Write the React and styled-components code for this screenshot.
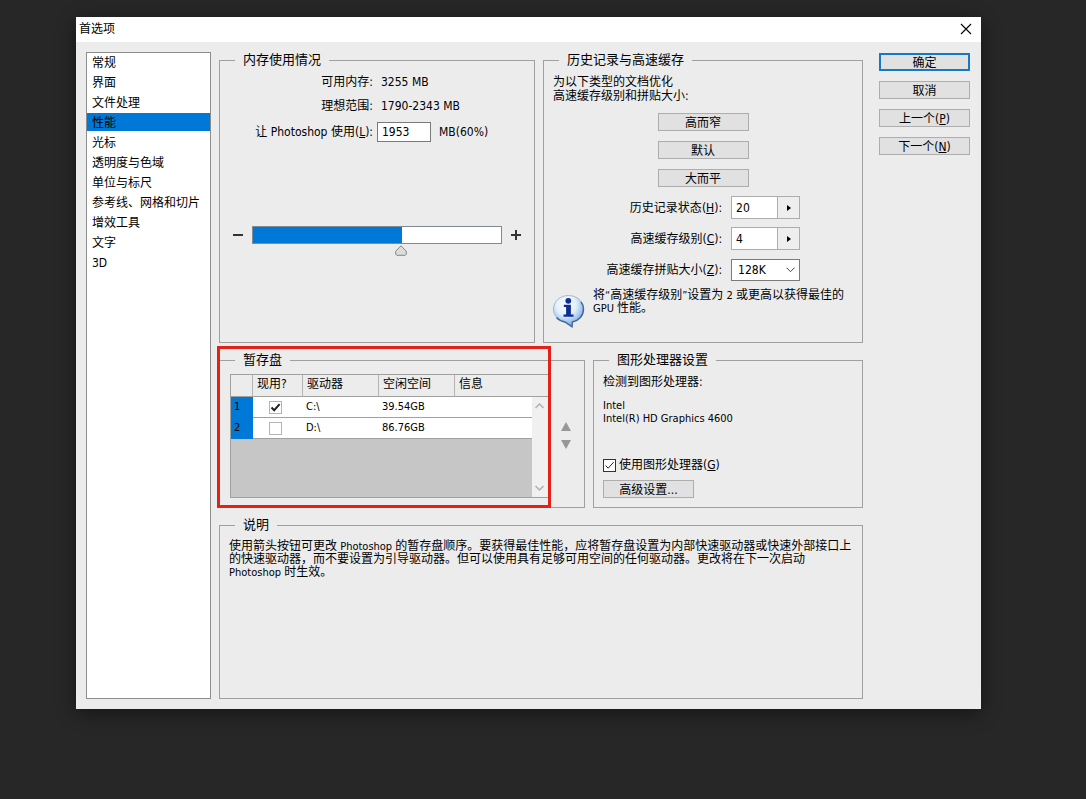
import React, { useState } from "react";
import styled, { createGlobalStyle, css } from "styled-components";

const svgUrl = (markup) => `url("data:image/svg+xml,${encodeURIComponent(markup)}")`;

const tickIcon = (color, width) =>
  svgUrl(
    `<svg xmlns='http://www.w3.org/2000/svg' width='11' height='11' viewBox='0 0 11 11'><path d='M1.5 5.5 4.2 8.2 9.6 2.2' fill='none' stroke='${color}' stroke-width='${width}'/></svg>`
  );
const chevronIcon = svgUrl(
  "<svg xmlns='http://www.w3.org/2000/svg' width='9' height='6' viewBox='0 0 9 6'><path d='M.5 .7 4.5 4.7 8.5 .7' fill='none' stroke='#444' stroke-width='1'/></svg>"
);
const thumbIcon = svgUrl(
  "<svg xmlns='http://www.w3.org/2000/svg' width='12' height='11' viewBox='0 0 12 11'><path d='M6 .8 11.3 6.2V9.2L10.3 10.3H1.7L.7 9.2V6.2Z' fill='#dcdcdc' stroke='#858585' stroke-width='1'/></svg>"
);

const GlobalStyle = createGlobalStyle`
  *, *::before, *::after { box-sizing: border-box; }
  body {
    margin: 0;
    background: #272727;
    color: #000;
    font: 12px/16px "DejaVu Sans Condensed", "Noto Sans CJK SC", sans-serif;
  }
  button, input, select { font: inherit; color: inherit; }
`;

const Page = styled.div`
  min-height: 100vh;
  padding: 17px 105px 90px 76px;
`;

const Dialog = styled.main`
  display: flex;
  flex-direction: column;
  background: #ececec;
  box-shadow: 0 4px 18px rgba(0, 0, 0, 0.45);
`;

const TitleBar = styled.header`
  display: flex;
  align-items: center;
  justify-content: space-between;
  height: 25px;
  padding: 0 9px 2px 3px;
  background: #fff;
`;

const Title = styled.h1`
  margin: 0;
  font-size: 12px;
  font-weight: 400;
`;

const PlainButton = styled.button`
  display: flex;
  align-items: center;
  justify-content: center;
  padding: 0;
  border: 0;
  background: none;
`;

const Body = styled.div`
  display: flex;
  gap: 8px;
  padding: 10px 11px 10px 10px;
`;

const Categories = styled.ul`
  display: flex;
  flex-direction: column;
  gap: 2px;
  flex: 0 0 125px;
  margin: 0;
  padding: 0;
  list-style: none;
  background: #fff;
  border: 1px solid #8c8c8c;
`;

const CategoryButton = styled.button`
  display: block;
  width: 100%;
  height: 18px;
  padding: 3px 5px 0;
  border: 0;
  text-align: left;
  line-height: 15px;
  background: ${(p) => (p.$selected ? "#0078d7" : "transparent")};
`;

const Panels = styled.div`
  display: flex;
  flex-direction: column;
  gap: 9px;
  flex: 1;
  min-width: 0;
`;

const PanelRow = styled.div`
  display: flex;
  gap: 8px;
  min-height: ${(p) => p.$min}px;
`;

const PanelCell = styled.div`
  position: relative;
  display: flex;
  flex: ${(p) => p.$share} 1 0;
  min-width: 0;
`;

const Group = styled.fieldset`
  flex: 1;
  min-width: 0;
  margin: 0;
  padding: ${(p) => p.$top}px 0 0;
  border: 1px solid #a0a0a0;
`;

const Legend = styled.legend`
  margin-left: 15px;
  padding: 0 8px;
  font-size: 13px;
  line-height: 16px;
`;

const Actions = styled.div`
  display: flex;
  flex-direction: column;
  gap: 10px;
  margin-left: 8px;
  padding-top: 1px;
`;

const PushButton = styled.button`
  display: block;
  width: 91px;
  height: 18px;
  padding: 1px 0 0;
  border: 1px solid #adadad;
  background: #e1e1e1;
  text-align: center;
  line-height: 16px;
  ${(p) =>
    p.$primary &&
    css`
      padding: 0;
      border: 2px solid #1779c4;
    `}
`;

const MemoryFields = styled.div`
  display: grid;
  grid-template-columns: 1fr 1fr;
  grid-template-rows: 24px 24px 28px;
  align-items: center;
  column-gap: 4px;
  padding-right: 4px;
`;

const FieldLabel = styled.label`
  text-align: right;
  white-space: nowrap;
`;

const FieldValue = styled.output`
  padding-left: 4px;
`;

const FieldInline = styled.div`
  display: flex;
  align-items: center;
  gap: 8px;
`;

const TextBox = styled.input`
  width: 54px;
  height: 20px;
  padding: 0 4px;
  border: 1px solid #7a7a7a;
  background: #fff;
`;

const SliderRow = styled.div`
  display: flex;
  align-items: center;
  gap: 9px;
  margin-top: 80px;
  padding: 0 13px;
`;

const Slider = styled.input`
  appearance: none;
  flex: 1;
  min-width: 0;
  height: 18px;
  margin: 0;
  background: none;

  &::-webkit-slider-runnable-track {
    height: 18px;
    border: 1px solid #7f8a94;
    background: linear-gradient(
      to right,
      #0078d7 ${(p) => p.$fill}%,
      #fff ${(p) => p.$fill}%
    );
  }

  &::-webkit-slider-thumb {
    appearance: none;
    width: 12px;
    height: 11px;
    margin-top: 18px;
    background: ${thumbIcon} no-repeat;
  }
`;

const Paragraph = styled.p`
  margin: 0;
  line-height: ${(p) => p.$line || 13}px;
`;

const GpuName = styled(Paragraph)`
  margin-top: 10px;
  font-size: 11px;
`;

const Small = styled.span`
  font-size: 11px;
`;

const Presets = styled.div`
  display: flex;
  flex-direction: column;
  align-items: center;
  gap: 10px;
  margin-top: 10px;
`;

const CacheFields = styled.div`
  display: grid;
  grid-template-columns: 56% 1fr;
  grid-auto-rows: 23px;
  align-items: center;
  gap: 8px 9px;
  margin-top: 9px;
`;

const Stepper = styled.div`
  display: flex;
  width: 69px;
  height: 23px;
  border: 1px solid #adadad;
  background: #fff;

  input {
    flex: 1;
    min-width: 0;
    padding: 0 4px;
    border: 0;
    background: none;
  }

  button {
    width: 22px;
    border-left: 1px solid #adadad;
    background: #eee;
  }
`;

const Select = styled.select`
  appearance: none;
  width: 69px;
  height: 22px;
  padding: 0 6px;
  border: 1px solid #7a7a7a;
  border-radius: 0;
  background: #fff ${chevronIcon} no-repeat right 4px center;
`;

const Hint = styled.div`
  display: flex;
  align-items: flex-start;
  gap: 8px;
  margin-top: 8px;
  padding: 0 9px 0 8px;

  svg {
    flex: none;
    margin-top: 5px;
  }
`;

const Inset = styled.div`
  padding: 0 9px;
`;

const ScratchLayout = styled.div`
  display: flex;
  padding: 0 0 9px 10px;
`;

const TableFrame = styled.div`
  position: relative;
  flex: 1;
  min-width: 0;
  height: 124px;
  border: 1px solid #a0a0a0;
  background: #c6c6c6;
`;

const DiskTable = styled.table`
  width: 100%;
  table-layout: fixed;
  border-collapse: separate;
  border-spacing: 0;

  th,
  td {
    padding: 0 4px;
    border-bottom: 1px solid #a0a0a0;
    font-weight: 400;
    text-align: left;
    line-height: 16px;
  }

  thead th {
    height: 22px;
    padding-bottom: 3px;
    border-right: 1px solid #b4b4b4;
    background: #ececec;
  }

  thead th:last-child {
    border-right: 0;
  }

  tbody th {
    border-bottom-color: #0078d7;
    background: #0078d7;
  }

  tbody th,
  tbody td {
    height: 21px;
    padding: 0 3px;
    font-size: 11px;
  }

  tbody td {
    background: #fff;
  }
`;

const CheckCell = styled.td`
  &&& {
    padding-left: 16px;
  }
`;

const Column = styled.col`
  width: ${(p) => p.$width}px;
`;

const CheckBox = styled.input`
  appearance: none;
  display: block;
  flex: none;
  width: 13px;
  height: 13px;
  margin: 0;
  border: 1px solid ${(p) => p.$edge};
  background: #fff;

  &:checked {
    background: #fff ${(p) => tickIcon("#222", p.$stroke)} center no-repeat;
  }
`;

const ScrollBar = styled.div`
  position: absolute;
  top: 22px;
  right: 0;
  bottom: 0;
  display: flex;
  flex-direction: column;
  justify-content: space-between;
  width: 17px;
  padding: 6px 3px 6px 0;
  background: #f0f0f0;
`;

const OrderButtons = styled.div`
  display: flex;
  flex-direction: column;
  align-items: center;
  gap: 9px;
  width: 34px;
  padding: 48px 2px 0 0;
`;

const Highlight = styled.div`
  position: absolute;
  top: -6px;
  right: 34px;
  bottom: 0;
  left: -2px;
  border: 3px solid #e2211c;
  pointer-events: none;
`;

const CheckLabel = styled.label`
  display: flex;
  align-items: center;
  gap: 3px;
  margin: 32px 0 7px;
`;

const categories = [
  "常规",
  "界面",
  "文件处理",
  "性能",
  "光标",
  "透明度与色域",
  "单位与标尺",
  "参考线、网格和切片",
  "增效工具",
  "文字",
  "3D",
];

const disks = [
  { drive: "C:\\", free: "39.54GB", active: true },
  { drive: "D:\\", free: "86.76GB", active: false },
];

function InfoIcon() {
  return (
    <svg width="33" height="34" viewBox="0 0 32 34" aria-hidden="true">
      <defs>
        <radialGradient id="bubble" cx="42%" cy="30%" r="68%">
          <stop offset="0" stopColor="#ffffff" />
          <stop offset="0.5" stopColor="#e2effc" />
          <stop offset="1" stopColor="#74a7e2" />
        </radialGradient>
      </defs>
      <path
        d="M16 1.500C7.500 1.500 1 7.500 1 15 1 21.600 5.600 26.800 12.500 28L19.500 32.800 19.800 28C26.400 26.600 31 21.600 31 15 31 7.500 24.500 1.500 16 1.500Z"
        fill="url(#bubble)"
        stroke="#a3b8d4"
      />
      <path
        d="M28.500 8C30.200 10 31 12.300 31 15 31 21.600 26.400 26.600 19.800 28L19.500 32.800 12.500 28C9 27.400 6 25.800 4 23.500"
        fill="none"
        stroke="#3f66a3"
        strokeWidth="1.400"
      />
      <circle cx="15.800" cy="6.800" r="2.900" fill="#0d2f91" />
      <path d="M11.300 10.800H18.400V20.500H21V22.800H11V20.500H13.600V13.100H11.300Z" fill="#0d2f91" />
    </svg>
  );
}

function StepperField({ id, label, accel, value }) {
  return (
    <>
      <FieldLabel htmlFor={id}>
        {label}(<u>{accel}</u>):
      </FieldLabel>
      <Stepper>
        <input id={id} defaultValue={value} />
        <PlainButton type="button" aria-label={label}>
          <svg width="4" height="6" viewBox="0 0 4 6">
            <path d="M0 0 4 3 0 6Z" fill="#000" />
          </svg>
        </PlainButton>
      </Stepper>
    </>
  );
}

function MemoryGroup() {
  const [share, setShare] = useState(60);
  return (
    <Group $top={2}>
      <Legend>内存使用情况</Legend>
      <MemoryFields>
        <FieldLabel htmlFor="available">可用内存:</FieldLabel>
        <FieldValue id="available">3255 MB</FieldValue>
        <FieldLabel htmlFor="ideal">理想范围:</FieldLabel>
        <FieldValue id="ideal">1790-2343 MB</FieldValue>
        <FieldLabel htmlFor="usage">
          让 Photoshop 使用(<u>L</u>):
        </FieldLabel>
        <FieldInline>
          <TextBox id="usage" defaultValue="1953" />
          <span>MB({share}%)</span>
        </FieldInline>
      </MemoryFields>
      <SliderRow>
        <PlainButton type="button" aria-label="减少" onClick={() => setShare(Math.max(0, share - 1))}>
          <svg width="10" height="10" viewBox="0 0 10 10">
            <path d="M0 5H10" stroke="#333" strokeWidth="2" />
          </svg>
        </PlainButton>
        <Slider
          type="range"
          aria-label="内存使用情况"
          min="0"
          max="100"
          value={share}
          $fill={share}
          onChange={(e) => setShare(Number(e.target.value))}
        />
        <PlainButton type="button" aria-label="增加" onClick={() => setShare(Math.min(100, share + 1))}>
          <svg width="10" height="10" viewBox="0 0 10 10">
            <path d="M0 5H10M5 0V10" stroke="#333" strokeWidth="2" />
          </svg>
        </PlainButton>
      </SliderRow>
    </Group>
  );
}

function CacheGroup() {
  return (
    <Group $top={7}>
      <Legend>历史记录与高速缓存</Legend>
      <Inset>
        <Paragraph $line={14}>
          为以下类型的文档优化
          <br />
          高速缓存级别和拼贴大小:
        </Paragraph>
      </Inset>
      <Presets>
        <PushButton type="button">高而窄</PushButton>
        <PushButton type="button">默认</PushButton>
        <PushButton type="button">大而平</PushButton>
      </Presets>
      <CacheFields>
        <StepperField id="history" label="历史记录状态" accel="H" value="20" />
        <StepperField id="levels" label="高速缓存级别" accel="C" value="4" />
        <FieldLabel htmlFor="tile">
          高速缓存拼贴大小(<u>Z</u>):
        </FieldLabel>
        <Select id="tile" defaultValue="128K">
          <option>128K</option>
        </Select>
      </CacheFields>
      <Hint>
        <InfoIcon />
        <Paragraph>
          将<Small>“</Small>高速缓存级别<Small>”</Small>设置为<Small> 2 </Small>或更高以获得最佳的
          <br />
          <Small>GPU </Small>性能。
        </Paragraph>
      </Hint>
    </Group>
  );
}

function ScratchGroup() {
  return (
    <Group $top={6}>
      <Legend>暂存盘</Legend>
      <ScratchLayout>
        <TableFrame>
          <DiskTable>
            <colgroup>
              <Column $width={22} />
              <Column $width={50} />
              <Column $width={76} />
              <Column $width={76} />
              <col />
            </colgroup>
            <thead>
              <tr>
                <th aria-label="序号" />
                <th>现用?</th>
                <th>驱动器</th>
                <th>空闲空间</th>
                <th>信息</th>
              </tr>
            </thead>
            <tbody>
              {disks.map((disk, i) => (
                <tr key={disk.drive}>
                  <th>{i + 1}</th>
                  <CheckCell>
                    <CheckBox
                      type="checkbox"
                      aria-label={disk.drive}
                      defaultChecked={disk.active}
                      $edge="#b4b4b4"
                      $stroke={2}
                    />
                  </CheckCell>
                  <td>{disk.drive}</td>
                  <td>{disk.free}</td>
                  <td />
                </tr>
              ))}
            </tbody>
          </DiskTable>
          <ScrollBar>
            <PlainButton type="button" aria-label="向上滚动">
              <svg width="9" height="6" viewBox="0 0 9 6">
                <path d="M.5 5 4.500 1 8.500 5" fill="none" stroke="#b0b0b0" strokeWidth="1.500" />
              </svg>
            </PlainButton>
            <PlainButton type="button" aria-label="向下滚动">
              <svg width="9" height="6" viewBox="0 0 9 6">
                <path d="M.5 1 4.500 5 8.500 1" fill="none" stroke="#b0b0b0" strokeWidth="1.500" />
              </svg>
            </PlainButton>
          </ScrollBar>
        </TableFrame>
        <OrderButtons>
          <PlainButton type="button" aria-label="上移">
            <svg width="10" height="9" viewBox="0 0 10 9">
              <path d="M5 0 10 9H0Z" fill="#979797" />
            </svg>
          </PlainButton>
          <PlainButton type="button" aria-label="下移">
            <svg width="10" height="9" viewBox="0 0 10 9">
              <path d="M5 9 10 0H0Z" fill="#979797" />
            </svg>
          </PlainButton>
        </OrderButtons>
      </ScratchLayout>
    </Group>
  );
}

function GraphicsGroup() {
  return (
    <Group $top={7}>
      <Legend>图形处理器设置</Legend>
      <Inset>
        <Paragraph $line={14}>检测到图形处理器:</Paragraph>
        <GpuName>
          Intel
          <br />
          Intel(R) HD Graphics 4600
        </GpuName>
        <CheckLabel>
          <CheckBox type="checkbox" defaultChecked $edge="#333" $stroke={1} />
          <span>
            使用图形处理器(<u>G</u>)
          </span>
        </CheckLabel>
        <PushButton type="button">高级设置...</PushButton>
      </Inset>
    </Group>
  );
}

export default function App() {
  const [selected, setSelected] = useState("性能");
  return (
    <Page>
      <GlobalStyle />
      <Dialog>
        <TitleBar>
          <Title>首选项</Title>
          <PlainButton type="button" aria-label="关闭">
            <svg width="12" height="12" viewBox="0 0 12 12">
              <path d="M1 1 11 11M11 1 1 11" stroke="#000" strokeWidth="1.100" />
            </svg>
          </PlainButton>
        </TitleBar>
        <Body>
          <Categories>
            {categories.map((name) => (
              <li key={name}>
                <CategoryButton
                  type="button"
                  $selected={name === selected}
                  onClick={() => setSelected(name)}
                >
                  {name}
                </CategoryButton>
              </li>
            ))}
          </Categories>
          <Panels>
            <PanelRow $min={291}>
              <PanelCell $share={316}>
                <MemoryGroup />
              </PanelCell>
              <PanelCell $share={320}>
                <CacheGroup />
              </PanelCell>
            </PanelRow>
            <PanelRow $min={156}>
              <PanelCell $share={366}>
                <ScratchGroup />
                <Highlight />
              </PanelCell>
              <PanelCell $share={270}>
                <GraphicsGroup />
              </PanelCell>
            </PanelRow>
            <PanelRow $min={182}>
              <Group $top={7}>
                <Legend>说明</Legend>
                <Inset>
                  <Paragraph>
                    使用箭头按钮可更改<Small> Photoshop </Small>
                    的暂存盘顺序。要获得最佳性能，应将暂存盘设置为内部快速驱动器或快速外部接口上
                    <br />
                    的快速驱动器，而不要设置为引导驱动器。但可以使用具有足够可用空间的任何驱动器。更改将在下一次启动
                    <br />
                    <Small>Photoshop </Small>时生效。
                  </Paragraph>
                </Inset>
              </Group>
            </PanelRow>
          </Panels>
          <Actions>
            <PushButton type="button" $primary>
              确定
            </PushButton>
            <PushButton type="button">取消</PushButton>
            <PushButton type="button">
              上一个(<u>P</u>)
            </PushButton>
            <PushButton type="button">
              下一个(<u>N</u>)
            </PushButton>
          </Actions>
        </Body>
      </Dialog>
    </Page>
  );
}
